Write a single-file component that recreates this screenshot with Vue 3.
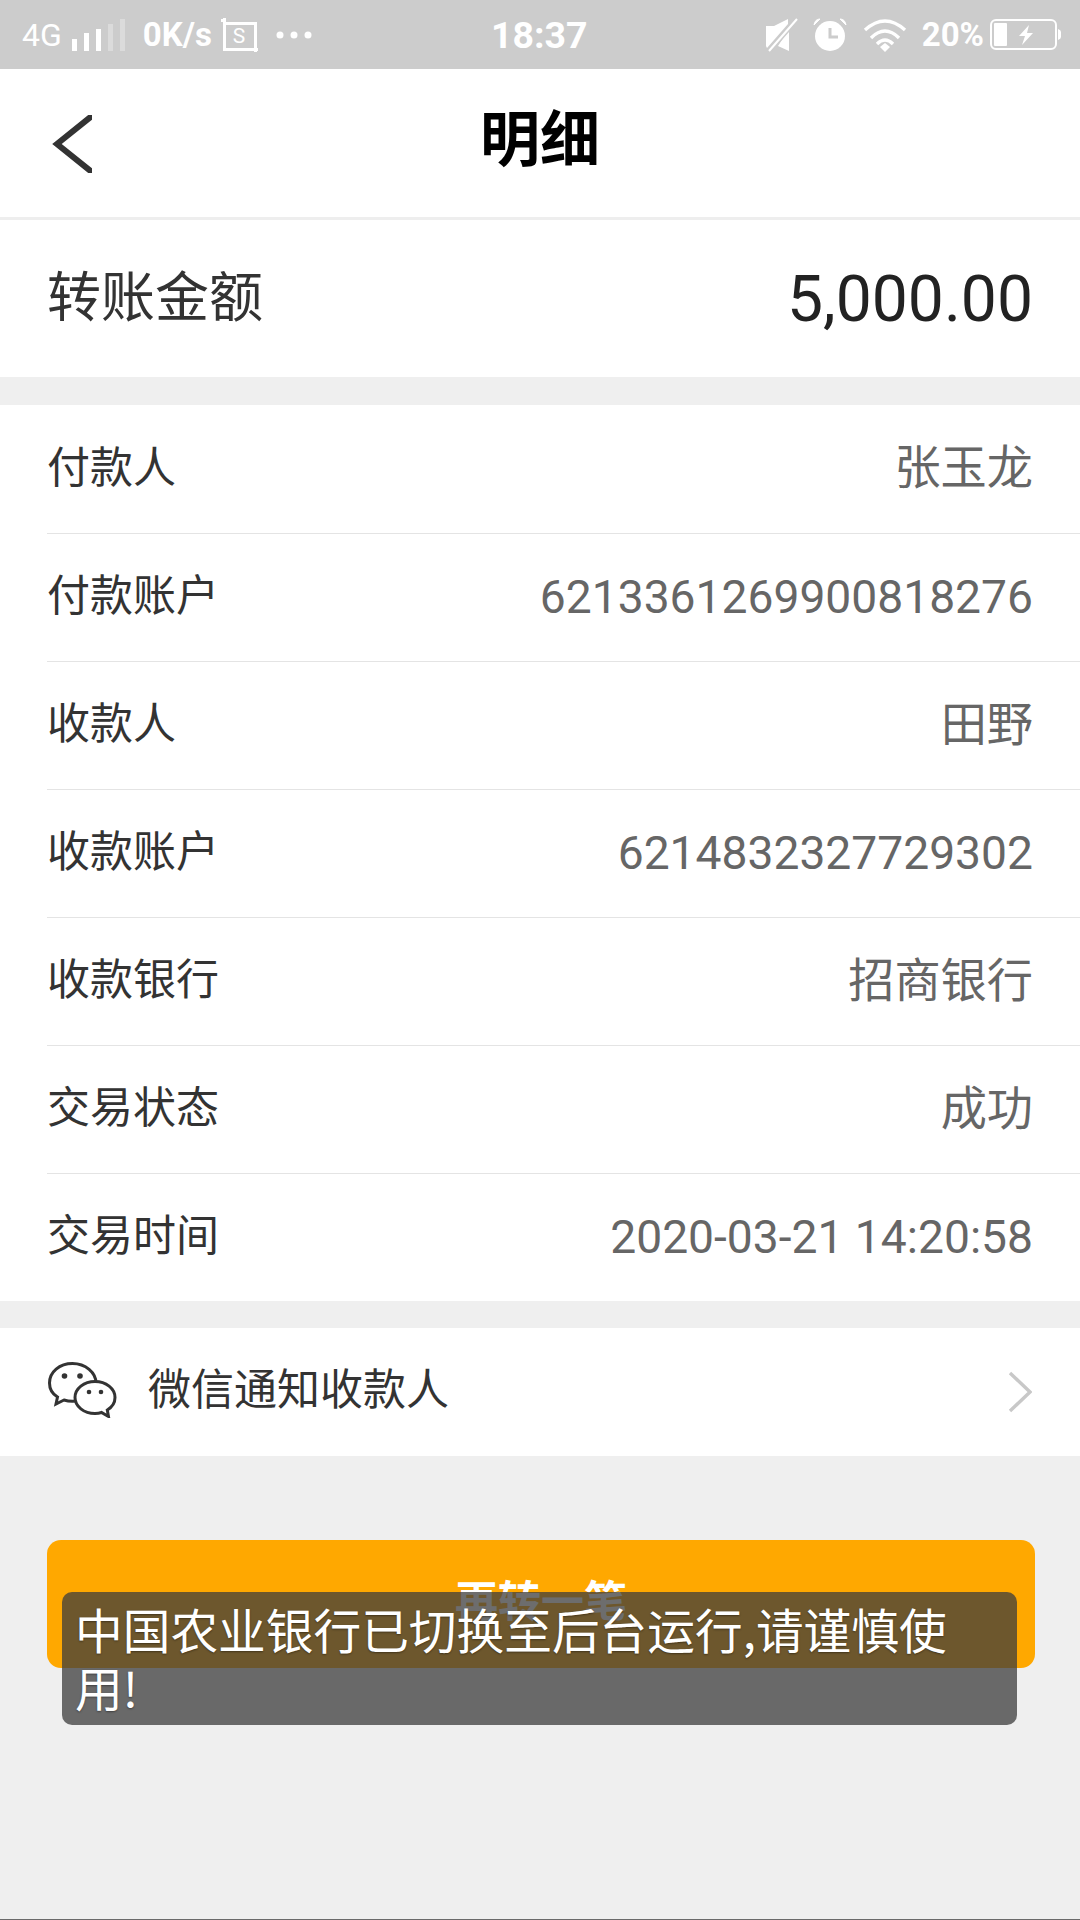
<script setup>
const rows = [
  { label: '付款人', value: '张玉龙' },
  { label: '付款账户', value: '6213361269900818276' },
  { label: '收款人', value: '田野' },
  { label: '收款账户', value: '6214832327729302' },
  { label: '收款银行', value: '招商银行' },
  { label: '交易状态', value: '成功' },
  { label: '交易时间', value: '2020-03-21 14:20:58' }
]
</script>

<template>
  <div class="page">
    <div class="status">
      <div class="status-left">
        <span class="net">4G</span>
        <svg class="signal" width="54" height="32" viewBox="0 0 54 32">
          <rect x="1" y="20" width="5" height="12" fill="#fff" />
          <rect x="13" y="14" width="5" height="18" fill="#fff" />
          <rect x="25" y="10" width="5" height="22" fill="#fff" />
          <rect x="37" y="5" width="5" height="27" fill="#fff" opacity="0.3" />
          <rect x="49" y="0" width="5" height="32" fill="#fff" opacity="0.3" />
        </svg>
        <span class="speed">0K/s</span>
        <svg class="shot" width="38" height="34" viewBox="0 0 38 34">
          <path d="M0 2.5h5M3.5 0v31.5h31V5.500H2" fill="none" stroke="#fff" stroke-width="3" />
          <path d="M31 31.500h6M34.500 31v3" fill="none" stroke="#fff" stroke-width="3" />
          <text x="18" y="25" class="shot-s">S</text>
        </svg>
        <svg class="dots" width="36" height="8" viewBox="0 0 36 8">
          <circle cx="4" cy="4" r="3.5" fill="#fff" />
          <circle cx="18" cy="4" r="3.5" fill="#fff" />
          <circle cx="32" cy="4" r="3.5" fill="#fff" />
        </svg>
      </div>
      <div class="time">18:37</div>
      <div class="status-right">
        <svg width="32" height="34" viewBox="0 0 32 34">
          <path d="M0 8h8L22 1v5L1 30 0 28zM23 11v22l-11-5z" fill="#fff" />
          <path d="M3 33 31 1" stroke="#ccc" stroke-width="5" />
          <path d="M3 33 31 1" stroke="#fff" stroke-width="2" />
        </svg>
        <svg class="alarm" width="34" height="34" viewBox="0 0 34 34">
          <circle cx="17" cy="18" r="15" fill="#fff" />
          <path d="M17 10v9h8" fill="none" stroke="#ccc" stroke-width="3" />
          <path d="M1 7 7 1q-5 0-6 6zM33 7 27 1q5 0 6 6z" fill="#fff" stroke="#fff" />
        </svg>
        <svg class="wifi" width="44" height="34" viewBox="0 0 44 34">
          <path d="M2 12Q22-6 42 12M8 20Q22 6 36 20M14 26Q22 18 30 26" fill="none" stroke="#fff" stroke-width="3.4" />
          <path d="M17 29l5-4 5 4-5 5z" fill="#fff" />
        </svg>
        <span class="pct">20%</span>
        <svg class="battery" width="72" height="32" viewBox="0 0 72 32">
          <rect x="1" y="1" width="65" height="29" rx="5" fill="none" stroke="#fff" stroke-width="2" />
          <rect x="4" y="4" width="13" height="23" rx="1" fill="#fff" />
          <path d="M68 10q3 1 3 3v5q0 2-3 3z" fill="#fff" />
          <path d="M39 6 29 17h6l-3 9 11-12h-6l2-8z" fill="#fff" />
        </svg>
      </div>
    </div>

    <header class="nav">
      <svg class="back" width="40" height="58" viewBox="0 0 40 58">
        <path d="M41 0 5 29l36 29" fill="none" stroke="#333" stroke-width="6" />
      </svg>
      <h1>明细</h1>
    </header>

    <section class="amount">
      <span class="amount-label">转账金额</span>
      <span class="amount-value">5,000.00</span>
    </section>

    <section class="list">
      <div v-for="row in rows" :key="row.label" class="row">
        <span class="label">{{ row.label }}</span>
        <span class="value">{{ row.value }}</span>
      </div>
    </section>

    <section class="notify">
      <svg class="wechat" width="70" height="56" viewBox="0 0 70 56">
        <path d="M24.500 1.500C11.500 1.500 1.500 10 1.500 21c0 6 3 11 8 14l-1.500 7 8-4c3 1 5.500 1.300 8.500 1.300 13 0 23.500-8 23.500-18.300S37.500 1.500 24.500 1.500z" fill="#fff" stroke="#333" stroke-width="3" />
        <path d="M47 19.500c-11 0-20 7-20 16s9 16 20 16c2.500 0 4.500-.3 6.500-1l7 4-1.200-6.500c5-3 7.700-7.500 7.700-12.500 0-9-9-16-20-16z" fill="#fff" stroke="#333" stroke-width="3" />
        <circle cx="16.500" cy="14" r="2.800" fill="#333" />
        <circle cx="32" cy="14" r="2.800" fill="#333" />
        <circle cx="41" cy="30" r="2.300" fill="#333" />
        <circle cx="53" cy="30" r="2.300" fill="#333" />
      </svg>
      <span class="notify-text">微信通知收款人</span>
      <svg class="chevron" width="24" height="42" viewBox="0 0 24 42">
        <path d="M2 2l20 19L2 40" fill="none" stroke="#c8c8c8" stroke-width="3.4" />
      </svg>
    </section>

    <button class="again"><span>再转一笔</span></button>

    <div class="toast">中国农业银行已切换至后台运行,请谨慎使用!</div>
  </div>
</template>

<style>
html, body { margin: 0; background: #efefef; }
</style>

<style scoped>
.page {
  position: relative;
  width: 1080px;
  height: 1920px;
  box-sizing: border-box;
  overflow: hidden;
  background: #efefef;
  border-bottom: 1px solid #6a6a6a;
  font-family: "Noto Sans CJK SC", Roboto, sans-serif;
  color: #333;
}

.status {
  position: relative;
  height: 69px;
  background: #ccc;
  color: #fff;
  display: flex;
  align-items: center;
  justify-content: space-between;
  padding: 0 18px 0 22px;
  font-family: Roboto, sans-serif;
}
.status-left, .status-right { display: flex; align-items: center; }
.net { font-size: 32px; margin-right: 9px; }
.speed { font-size: 33px; font-weight: 700; margin: 0 9px 0 18px; }
.shot-s { font-size: 21px; fill: #fff; text-anchor: middle; font-family: Roboto, sans-serif; }
.dots { margin-left: 17px; }
.time { position: absolute; left: 491px; font-size: 37.5px; font-weight: 700; }
.alarm { margin-left: 15px; }
.wifi { margin-left: 16px; }
.pct { font-size: 33px; font-weight: 700; margin-left: 15px; }
.battery { margin-left: 6px; }

.nav {
  height: 148px;
  background: #fff;
  display: flex;
  align-items: center;
  justify-content: center;
  position: relative;
  border-bottom: 3px solid #eee;
}
.nav h1 { margin: 0; padding-bottom: 17px; font-size: 60px; font-weight: 700; color: #000; }
.back { position: absolute; left: 52px; top: 46px; }

.amount {
  height: 157px;
  background: #fff;
  display: flex;
  align-items: center;
  justify-content: space-between;
  padding: 0 47px;
}
.amount-label { font-size: 54px; padding-bottom: 10px; }
.amount-value { font-family: Roboto, sans-serif; font-size: 64.2px; color: #222; }

.list {
  margin-top: 28px;
  background: #fff;
  padding-left: 47px;
}
.row {
  height: 127px;
  display: flex;
  align-items: center;
  justify-content: space-between;
  padding-right: 47px;
  border-bottom: 1px solid #e4e4e4;
}
.row:first-child { height: 128px; }
.row:last-child { border-bottom: none; height: 127px; }
.label { font-size: 43px; line-height: 1; padding-bottom: 10px; }
.value {
  font-size: 46.2px;
  line-height: 1;
  padding-bottom: 1px;
  color: #666;
  font-family: Roboto, "Noto Sans CJK SC", sans-serif;
}

.notify {
  margin-top: 27px;
  height: 128px;
  background: #fff;
  display: flex;
  align-items: center;
  padding: 0 48px;
}
.wechat { margin-bottom: 4px; }
.notify-text { font-size: 43px; margin-left: 30px; padding-bottom: 12px; flex: 1; }
.chevron { margin-bottom: 1px; }

.again {
  display: block;
  margin: 84px 45px 0 47px;
  width: 988px;
  height: 128px;
  border: none;
  border-radius: 14px;
  background: #ffa800;
  color: #fff;
  font-family: inherit;
  font-size: 43px;
  font-weight: 700;
  padding: 0 0 12px;
}

.toast {
  position: absolute;
  left: 62px;
  top: 1592px;
  width: 955px;
  height: 133px;
  box-sizing: border-box;
  padding: 8px 40px 0 13px;
  border-radius: 10px;
  background: rgba(60, 60, 60, 0.75);
  color: #fff;
  font-size: 47.7px;
  line-height: 58px;
  text-shadow: 0 1px 2px rgba(0, 0, 0, 0.4);
}
</style>
